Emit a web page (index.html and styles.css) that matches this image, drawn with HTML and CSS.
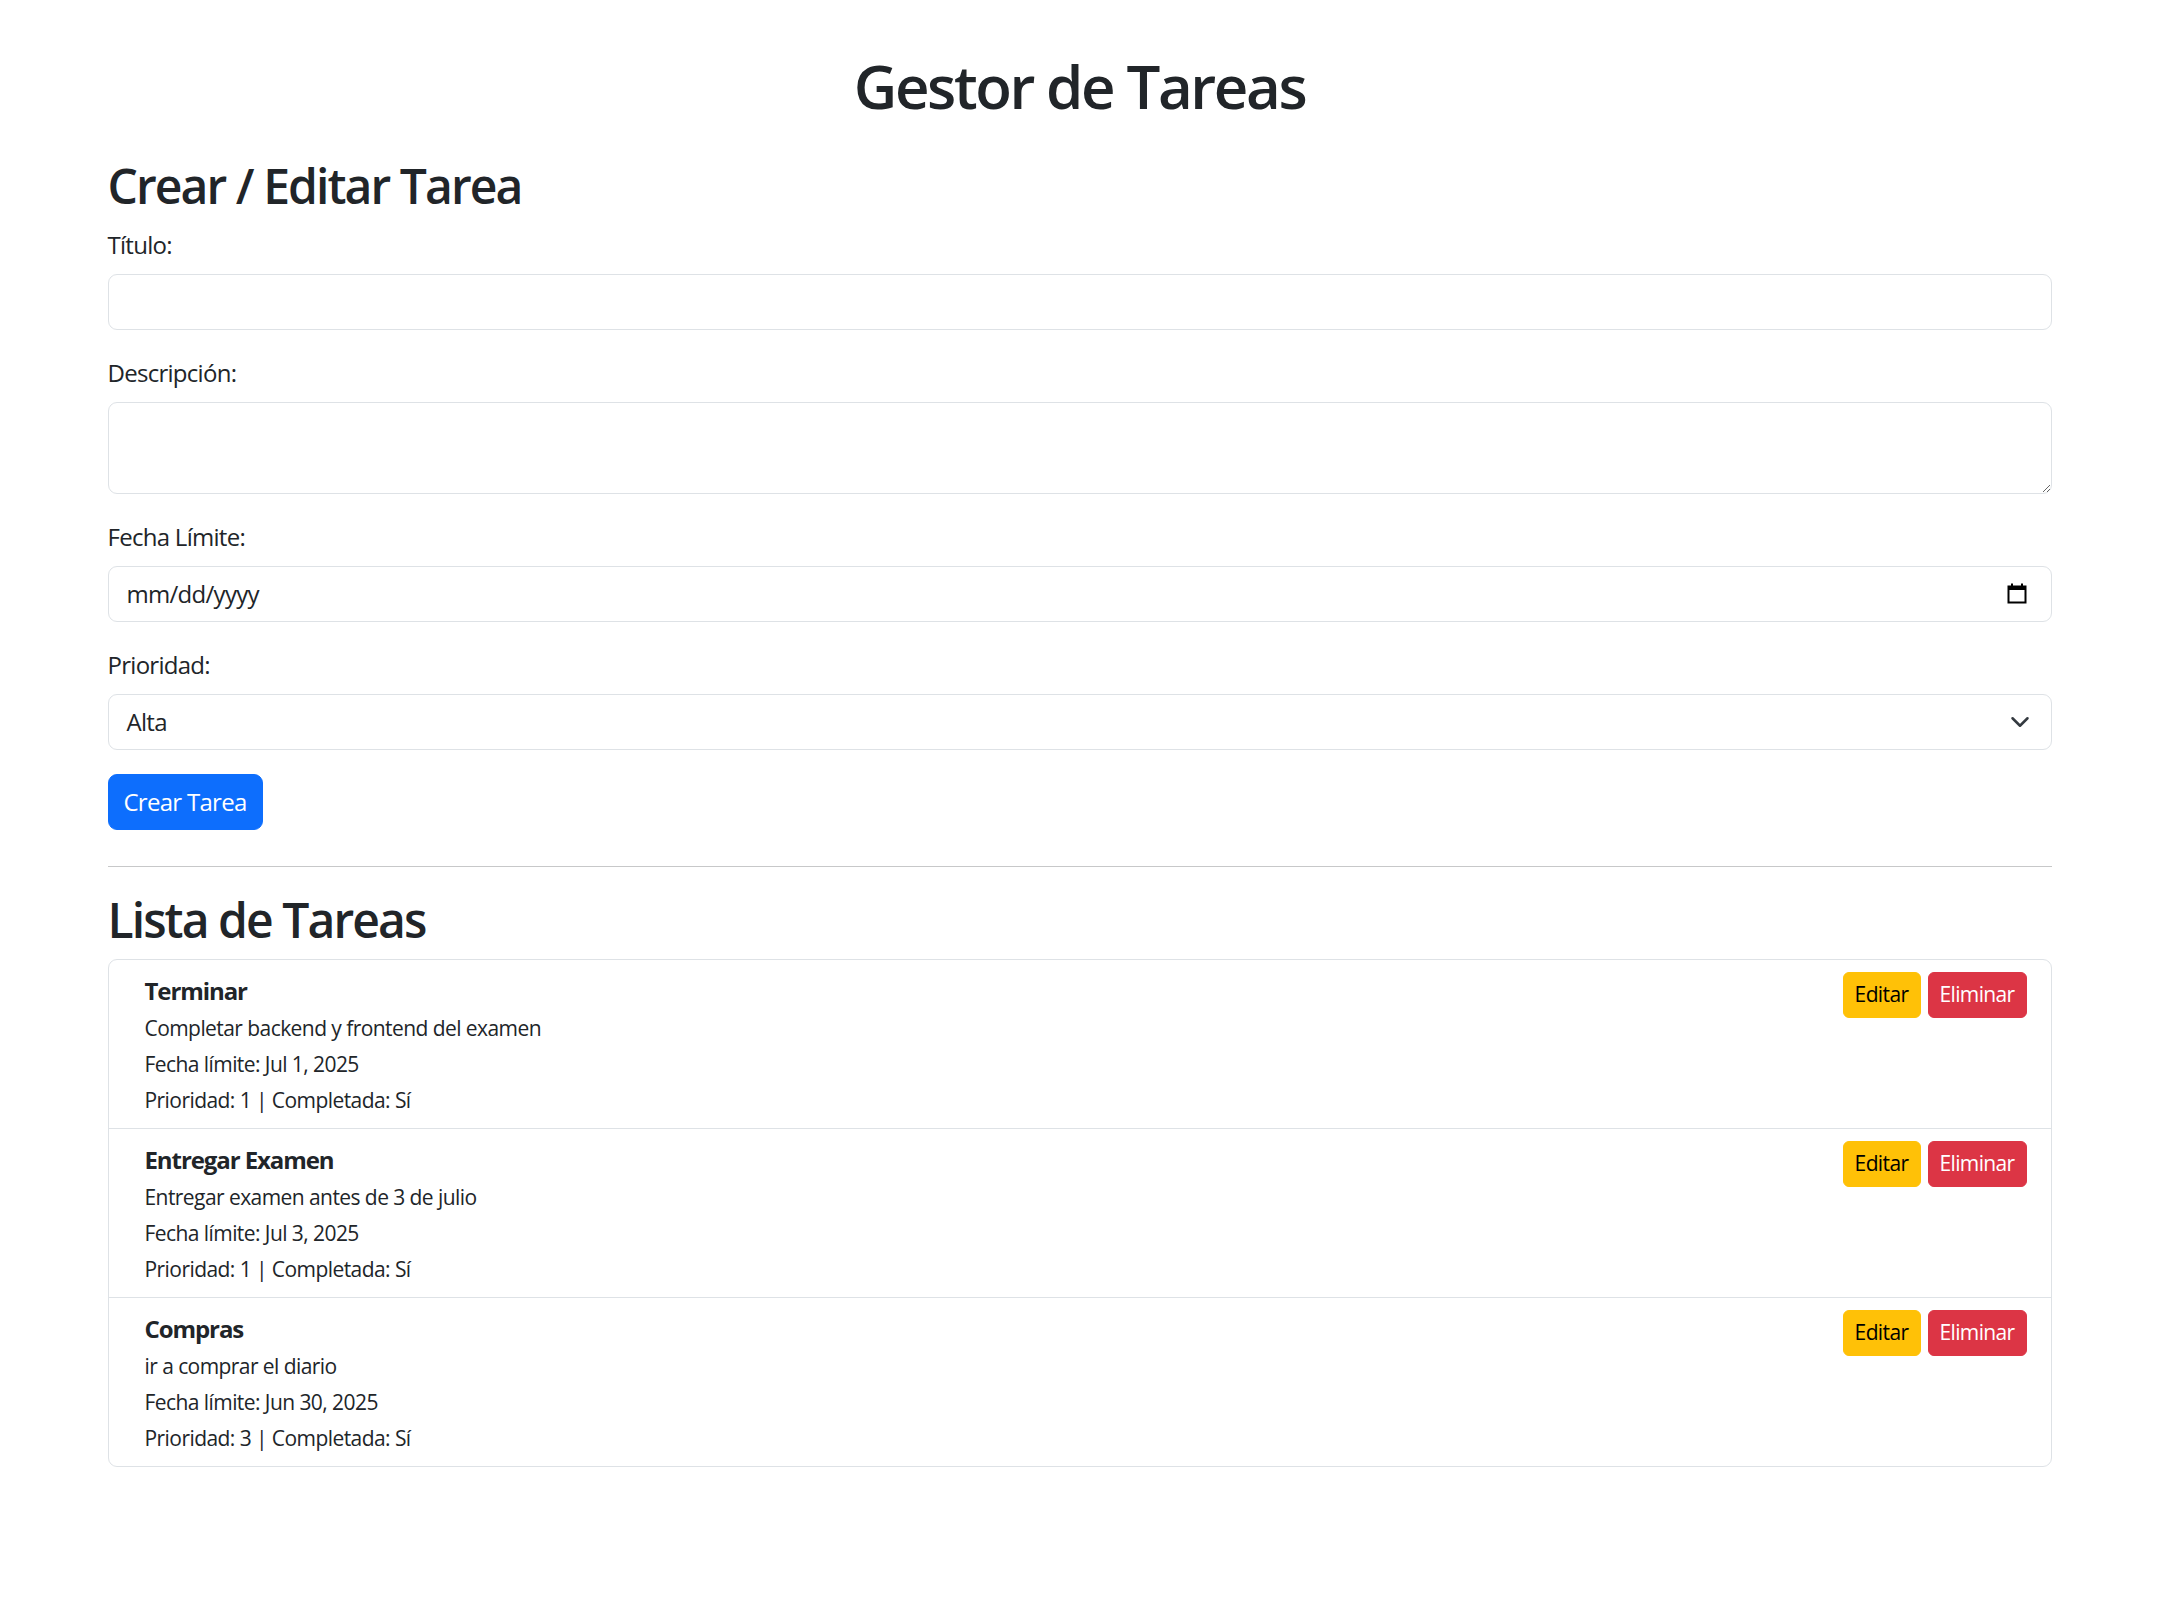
FILE: index.html
```html
<!DOCTYPE html>
<html lang="es">
<head>
<meta charset="utf-8">
<title>Gestor de Tareas</title>
<link rel="stylesheet" href="styles.css">
</head>
<body>
<div class="container">
  <h1 class="page-title">Gestor de Tareas</h1>

  <h2 class="section-title">Crear / Editar Tarea</h2>
  <form class="task-form">
    <div class="field">
      <label class="field-label" for="titulo">Título:</label>
      <input class="form-control" id="titulo" type="text">
    </div>
    <div class="field">
      <label class="field-label" for="descripcion">Descripción:</label>
      <textarea class="form-control form-textarea" id="descripcion" rows="2"></textarea>
    </div>
    <div class="field">
      <label class="field-label">Fecha Límite:</label>
      <div class="form-control input-with-icon">
        <span class="date-text">mm/dd/yyyy</span>
        <svg class="calendar-icon" width="20" height="21" viewBox="0 0 20 21" aria-hidden="true">
          <rect x="1.5" y="3.5" width="17" height="16" fill="none" stroke="#000" stroke-width="2"/>
          <rect x="1" y="3" width="18" height="4" fill="#000"/>
          <rect x="4" y="0.5" width="2" height="3" fill="#000"/>
          <rect x="14" y="0.5" width="2" height="3" fill="#000"/>
        </svg>
      </div>
    </div>
    <div class="field">
      <label class="field-label">Prioridad:</label>
      <div class="form-control input-with-icon">
        <span>Alta</span>
        <svg class="chevron-icon" width="20" height="20" viewBox="0 0 16 16" aria-hidden="true">
          <path d="m2 5 6 6 6-6" fill="none" stroke="#343a40" stroke-width="2" stroke-linecap="round" stroke-linejoin="round"/>
        </svg>
      </div>
    </div>
    <button class="btn btn-primary" type="button">Crear Tarea</button>
  </form>

  <hr class="divider">

  <h2 class="section-title">Lista de Tareas</h2>
  <ul class="task-list">
    <li class="task-item">
      <div class="task-body">
        <div class="task-title">Terminar</div>
        <div><small>Completar backend y frontend del examen</small></div>
        <div><small>Fecha límite: Jul 1, 2025</small></div>
        <div><small>Prioridad: 1 | Completada: Sí</small></div>
      </div>
      <div class="task-actions">
        <button class="btn btn-sm btn-warning" type="button">Editar</button>
        <button class="btn btn-sm btn-danger" type="button">Eliminar</button>
      </div>
    </li>
    <li class="task-item">
      <div class="task-body">
        <div class="task-title">Entregar Examen</div>
        <div><small>Entregar examen antes de 3 de julio</small></div>
        <div><small>Fecha límite: Jul 3, 2025</small></div>
        <div><small>Prioridad: 1 | Completada: Sí</small></div>
      </div>
      <div class="task-actions">
        <button class="btn btn-sm btn-warning" type="button">Editar</button>
        <button class="btn btn-sm btn-danger" type="button">Eliminar</button>
      </div>
    </li>
    <li class="task-item">
      <div class="task-body">
        <div class="task-title">Compras</div>
        <div><small>ir a comprar el diario</small></div>
        <div><small>Fecha límite: Jun 30, 2025</small></div>
        <div><small>Prioridad: 3 | Completada: Sí</small></div>
      </div>
      <div class="task-actions">
        <button class="btn btn-sm btn-warning" type="button">Editar</button>
        <button class="btn btn-sm btn-danger" type="button">Eliminar</button>
      </div>
    </li>
  </ul>
</div>
</body>
</html>
```

FILE: styles.css
```css
* {
  box-sizing: border-box;
}

body {
  margin: 0;
  padding-right: 3px;
  font-family: "Open Sans", "Liberation Sans", sans-serif;
  font-size: 24px;
  line-height: 36px;
  letter-spacing: -0.03em;
  color: #212529;
  background: #fff;
}

.container {
  width: 1944px;
  margin: 0 auto;
  padding-top: 50px;
}

.page-title {
  margin: 0 0 35px;
  font-size: 60px;
  line-height: 72px;
  font-weight: 600;
  letter-spacing: -0.04em;
  text-align: center;
}

.section-title {
  margin: 0 0 11px;
  font-size: 48px;
  line-height: 57.6px;
  font-weight: 600;
  letter-spacing: -0.04em;
}

.task-form {
  margin: 0;
}

.field {
  margin-bottom: 24px;
}

.field-label {
  display: block;
  margin-bottom: 12px;
  padding-top: 1px;
  line-height: 35px;
}

.form-control {
  display: block;
  width: 100%;
  height: 56px;
  padding: 9px 18px;
  font: inherit;
  letter-spacing: -0.03em;
  color: #212529;
  background: #fff;
  border: 1px solid #dee2e6;
  border-radius: 9px;
  outline: none;
}

.form-textarea {
  height: 92px;
  resize: vertical;
}

.input-with-icon {
  display: flex;
  align-items: center;
  justify-content: space-between;
}

.calendar-icon {
  margin-right: 6px;
  flex: none;
}

.chevron-icon {
  margin-right: 3px;
  flex: none;
}

.btn {
  display: inline-block;
  font: inherit;
  letter-spacing: -0.03em;
  text-align: center;
  cursor: pointer;
  border: 1px solid transparent;
}

.btn-primary {
  height: 56px;
  padding: 9px 0;
  width: 155px;
  color: #fff;
  background: #0d6efd;
  border-color: #0d6efd;
  border-radius: 9px;
}

.divider {
  margin: 36px 0 24px;
  border: 0;
  border-top: 1px solid #212529;
  opacity: 0.25;
}

.task-list {
  list-style: none;
  margin: 1px 0 0;
  padding: 0;
  border: 1px solid #dee2e6;
  border-radius: 9px;
}

.task-item {
  display: flex;
  justify-content: space-between;
  align-items: flex-start;
  padding: 12px 24px 11px;
}

.task-item + .task-item {
  border-top: 1px solid #dee2e6;
}

.task-body {
  padding-top: 1px;
  padding-left: 12px;
}

.task-body > div {
  height: 36px;
}

.task-title {
  font-weight: 700;
  letter-spacing: -0.045em;
}

.task-body small {
  font-size: 21px;
  line-height: 28px;
  letter-spacing: -0.027em;
}

.task-actions {
  display: flex;
  gap: 7px;
}

.btn-sm {
  height: 46px;
  padding: 6px 0;
  font-size: 21px;
  line-height: 31.5px;
  border-radius: 6px;
}

.btn-warning {
  width: 78px;
  color: #000;
  background: #ffc107;
  border-color: #ffc107;
}

.btn-danger {
  width: 99px;
  color: #fff;
  background: #dc3545;
  border-color: #dc3545;
}
```
